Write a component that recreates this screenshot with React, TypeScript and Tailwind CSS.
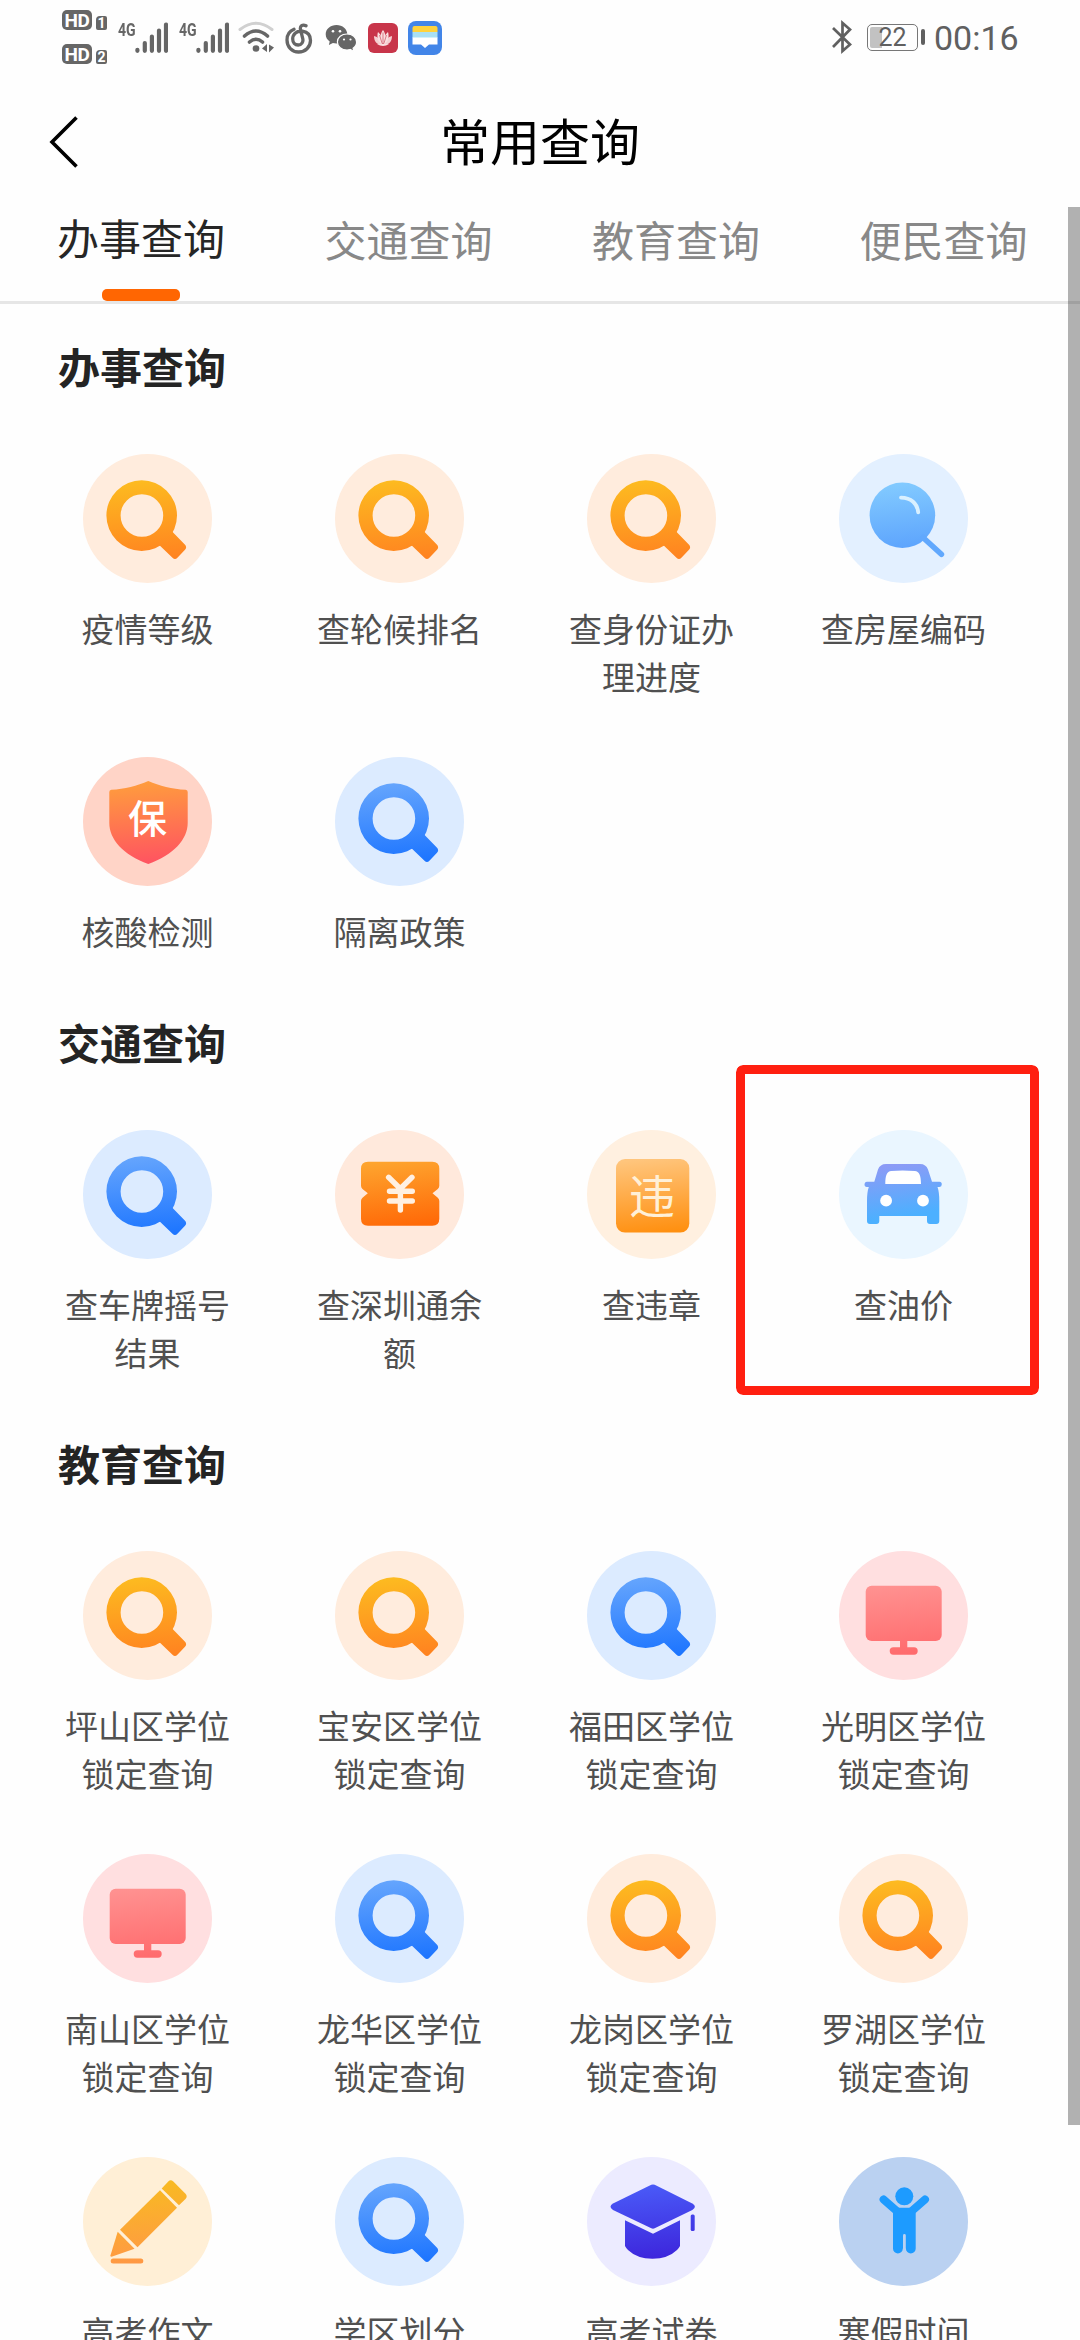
import React from "react";

type IconKind =
  | "searchOrange" | "searchBlue" | "lens" | "shield" | "ticket"
  | "violation" | "car" | "monitor" | "pencil" | "cap" | "person";

type Item = { label: string; icon: IconKind; marked?: boolean };
type Section = { title: string; items: Item[] };

const sections: Section[] = [
  {
    title: "办事查询",
    items: [
      { label: "疫情等级", icon: "searchOrange" },
      { label: "查轮候排名", icon: "searchOrange" },
      { label: "查身份证办理进度", icon: "searchOrange" },
      { label: "查房屋编码", icon: "lens" },
      { label: "核酸检测", icon: "shield" },
      { label: "隔离政策", icon: "searchBlue" },
    ],
  },
  {
    title: "交通查询",
    items: [
      { label: "查车牌摇号结果", icon: "searchBlue" },
      { label: "查深圳通余额", icon: "ticket" },
      { label: "查违章", icon: "violation" },
      { label: "查油价", icon: "car", marked: true },
    ],
  },
  {
    title: "教育查询",
    items: [
      { label: "坪山区学位锁定查询", icon: "searchOrange" },
      { label: "宝安区学位锁定查询", icon: "searchOrange" },
      { label: "福田区学位锁定查询", icon: "searchBlue" },
      { label: "光明区学位锁定查询", icon: "monitor" },
      { label: "南山区学位锁定查询", icon: "monitor" },
      { label: "龙华区学位锁定查询", icon: "searchBlue" },
      { label: "龙岗区学位锁定查询", icon: "searchOrange" },
      { label: "罗湖区学位锁定查询", icon: "searchOrange" },
      { label: "高考作文", icon: "pencil" },
      { label: "学区划分", icon: "searchBlue" },
      { label: "高考试卷", icon: "cap" },
      { label: "寒假时间", icon: "person" },
    ],
  },
];

const palette: Record<IconKind, { bg: string; from: string; to: string; y1: number; y2: number }> = {
  searchOrange: { bg: "#ffecdd", from: "#fdbb20", to: "#ff8320", y1: 26, y2: 106 },
  searchBlue: { bg: "#dcebff", from: "#65a5fd", to: "#1d75ff", y1: 26, y2: 106 },
  lens: { bg: "#e3f0ff", from: "#83cbff", to: "#5ba2fd", y1: 28, y2: 98 },
  shield: { bg: "#ffd4c7", from: "#ff9d3d", to: "#ff5361", y1: 24, y2: 107 },
  ticket: { bg: "#ffe9dc", from: "#fea42e", to: "#ff6a08", y1: 31, y2: 96 },
  violation: { bg: "#fff0e0", from: "#ffc57c", to: "#ff9011", y1: 29, y2: 103 },
  car: { bg: "#eaf6ff", from: "#8c9bf6", to: "#4cb0ff", y1: 34, y2: 86 },
  monitor: { bg: "#ffdfe0", from: "#ff9190", to: "#ff6b6d", y1: 34, y2: 104 },
  pencil: { bg: "#ffefd6", from: "#f8bc20", to: "#ff9845", y1: 22, y2: 106 },
  cap: { bg: "#ecebff", from: "#4a5bf8", to: "#3d26dc", y1: 27, y2: 102 },
  person: { bg: "#bad1f1", from: "#1d9bff", to: "#1d9bff", y1: 30, y2: 96 },
};

function Glyph({ kind, fill }: { kind: IconKind; fill: string }) {
  const bg = palette[kind].bg;
  switch (kind) {
    case "searchOrange":
    case "searchBlue":
      return (
        <g fill={fill}>
          <path fillRule="evenodd" d="M58.7 26.3a35.2 35.2 0 1 1 0 70.6a35.2 35.2 0 1 1 0-70.6ZM58.9 40.2a21.3 21.3 0 1 0 0 42.6a21.3 21.3 0 1 0 0-42.6Z" />
          <path d="M88.5 76q.4 1.3 1.6 2.4l11.7 12q2.600 2.700 .2 5.400l-7.600 8q-2.400 2.400-4.900 0L78.300 93q-1.500-1.700-3.500-1.300l-1-7 8-9Z" />
        </g>
      );
    case "lens":
      return (
        <g>
          <circle cx="63.4" cy="61.2" r="32.8" fill={fill} />
          <path d="M84 83.500l18.400 16.800" stroke="#61a8fd" strokeWidth="5.600" strokeLinecap="round" />
          <path d="M62 43.600c10 0 16.500 6 17.200 14.800" fill="none" stroke="#d9f0ff" strokeWidth="3.800" strokeLinecap="round" />
        </g>
      );
    case "shield":
      return (
        <g>
          <path fill={fill} d="M65.300 24c11 5 24 8 37.400 8.800q2 .2 2 2.200v31c0 16-14 32-39.400 41C40 98 26.300 82 26.300 66V35q0-2 2-2.200C41.500 32 54.300 29 65.300 24Z" />
          <text x="64.500" y="75.500" textAnchor="middle" fontSize="39" fontWeight="500" fill="#fff" fontFamily="Noto Sans CJK SC, sans-serif">保</text>
        </g>
      );
    case "ticket":
      return (
        <g>
          <path fill={fill} d="M33 31.700h64.300q7 0 7 7v17q0 2-1.500 3.200l-5.300 4.400 5.300 4.400q1.500 1.200 1.500 3.200v17.800q0 7-7 7H33q-7 0-7-7V70.900q0-2 1.500-3.200l5.300-4.400-5.300-4.400Q26 57.700 26 55.700v-17q0-7 7-7Z" />
          <path d="M53.600 47.300l11.700 11.500L77 47.300M54.500 61.200h22.800M54.500 71h22.800M65.400 60v20" fill="none" stroke="#fff0e2" strokeWidth="5.400" strokeLinecap="round" />
        </g>
      );
    case "violation":
      return (
        <g>
          <rect x="29" y="29" width="73.300" height="73.600" rx="9" fill={fill} />
          <text x="65" y="82.500" textAnchor="middle" fontSize="46" fill="#fff0d8" fontFamily="Noto Sans CJK SC, sans-serif">违</text>
        </g>
      );
    case "car":
      return (
        <g>
          <path fill={fill} d="M47 34h34q6 0 8 5.500L93 51.700h7.500q2.300 0 2.300 2.600T100.500 57h-2q1.800 5 1.800 14v20q0 3-3 3H91q-3 0-3-3v-5H40.300v5q0 3-3 3H31q-3 0-3-3V71q0-9 1.800-14h-2q-2.300 0-2.300-2.700t2.300-2.600h7.500L39 39.500Q41 34 47 34Z" />
          <path fill="#fff" d="M46.300 54c0-8 1.500-13 6-13q11-1 23.500 0c4.500 0 6.200 5 6.200 13Z" />
          <circle cx="47.100" cy="70.700" r="5.900" fill="#fff" />
          <circle cx="84" cy="70.700" r="5.900" fill="#fff" />
        </g>
      );
    case "monitor":
      return (
        <g fill={fill}>
          <rect x="26.700" y="34.700" width="76" height="55.300" rx="6" />
          <rect x="61" y="89" width="7.300" height="9" />
          <rect x="50.700" y="96.300" width="28" height="7.400" rx="3.700" />
        </g>
      );
    case "pencil":
      return (
        <g fill={fill}>
          <path d="M78.700 31.500l6.600-7q2.400-2.400 5 0l12.200 12.200q2.400 2.600 0 5.300L96 48.300Z" />
          <path d="M77 33.300L94 50.700L54.500 90.200L37 72.700Z" />
          <path d="M34.700 74.700L51.500 91.800L28.500 99.700q-1.200 0-1-1.500Z" />
          <rect x="27.700" y="101.500" width="32.600" height="5" rx="2.500" />
        </g>
      );
    case "cap":
      return (
        <g fill={fill}>
          <path d="M64.300 27.800q1.700-.8 3.400 0l37.600 18.700q5.200 3.200 0 6.400L67.700 71.300q-1.700.8-3.400 0L26 52.900q-5-3.200 0-6.400Z" />
          <path d="M38 63.300L66 76.800L93 63.300V89q-1 2-3 4q-9 8.700-24.500 8.700T41 93q-2-2-3-4Z" />
          <rect x="103.700" y="57.500" width="4" height="16.500" rx="1.500" />
        </g>
      );
    case "person":
      return (
        <g fill={fill}>
          <circle cx="65.300" cy="39.300" r="9" />
          <path d="M44.600 42.500L60 56M86 42.500L70.500 56" stroke="#1d9bff" strokeWidth="8" strokeLinecap="round" />
          <path d="M57 50.700h17l2.700 5V91.500a4.900 4.900 0 0 1-9.800 0h-3.100a4.900 4.900 0 0 1-9.800 0V55Z" />
          <path d="M64 98V78.500a1.400 1.400 0 0 1 2.800 0V98Z" fill={bg} />
        </g>
      );
  }
}

function ServiceIcon({ kind }: { kind: IconKind }) {
  const id = React.useId();
  const p = palette[kind];
  return (
    <svg className="block h-[129px] w-[129px] shrink-0" viewBox="0 0 129 129" aria-hidden="true">
      <defs>
        <linearGradient id={id} gradientUnits="userSpaceOnUse" x1="58" y1={p.y1} x2="66" y2={p.y2}>
          <stop offset="0" stopColor={p.from} />
          <stop offset="1" stopColor={p.to} />
        </linearGradient>
      </defs>
      <circle cx="64.500" cy="64.500" r="64.500" fill={p.bg} />
      <Glyph kind={kind} fill={`url(#${id})`} />
    </svg>
  );
}

function HdBadge({ n }: { n: string }) {
  return (
    <div className="flex h-5 items-end gap-[4px] font-['Roboto',sans-serif] font-bold text-white">
      <span className="flex h-5 w-[30px] items-center justify-center rounded-[5px] bg-[#666] text-[19px] leading-none tracking-[-0.5px]">HD</span>
      <span className="flex h-[14px] w-[11px] items-center justify-center rounded-[2px] rounded-tl-[4px] bg-[#666] text-[14px] leading-none">{n}</span>
    </div>
  );
}

function Signal() {
  return (
    <div className="flex h-[32px] w-[50px] items-start">
      <span className="w-[17px] origin-left scale-x-[0.74] pt-[1px] font-['Roboto',sans-serif] text-[19px] font-bold leading-[16px] text-[#666]">4G</span>
      <svg className="h-[32px] w-[33px] shrink-0" viewBox="0 0 33 32" stroke="#666" strokeWidth="4.200" strokeLinecap="round">
        <path d="M2.400 28.800v1M9.800 22v7.800M16.900 15.500v14.300M24 9.500v20.300M31 3.500v26.300" />
      </svg>
    </div>
  );
}

function StatusBar() {
  return (
    <div className="flex h-[80px] shrink-0 items-start justify-between pl-[62px] pr-[62px]">
      <div className="flex items-start">
        <div className="flex flex-col gap-[14px] pt-[10px]">
          <HdBadge n="1" />
          <HdBadge n="2" />
        </div>
        <div className="ml-[11px] flex gap-[11px] pt-[21px]">
          <Signal />
          <Signal />
        </div>
        <svg className="ml-[9px] mt-[20px] h-[34px] w-[38px]" viewBox="0 0 38 34" fill="none" strokeLinecap="round">
          <path d="M2 9.500Q18 -3 34 9.500" stroke="#d0d0d0" strokeWidth="3" />
          <path d="M6.500 16Q18 6 29.500 16" stroke="#666" strokeWidth="3.600" />
          <path d="M11.500 22Q18 16.500 24.500 22" stroke="#666" strokeWidth="3.600" />
          <circle cx="18" cy="28.500" r="3.300" fill="#666" />
          <path d="M24 28.500l5-4.500v8ZM31 24.500v8l5-5Z" fill="#666" />
        </svg>
        <svg className="ml-[9px] mt-[23px] h-[31px] w-[28px]" viewBox="0 0 28 31" fill="none" stroke="#666" strokeWidth="3.300" strokeLinecap="round">
          <path d="M9 6.300C4.500 8 2 12 2 17c0 7 5 12 11.600 12S25.500 24 25.500 17.500c0-5-3-8.500-8-9.300C11 7.500 7.700 11.500 7.700 16c0 3.500 2.200 6 5.500 6s5.300-3 4.600-6.200L15.500 6.500c-.8-3.500 2-5.500 5.500-3.700" />
        </svg>
        <svg className="ml-[12px] mt-[24px] h-[28px] w-[33px]" viewBox="0 0 33 28">
          <path d="M11.500 1C5.500 1 .7 5 .7 10.300c0 3 1.600 5.600 4 7.300l-.8 3.400 4-2c1.100.3 2.300.5 3.600.5 6 0 10.800-4 10.800-9.200S17.500 1 11.500 1Z" fill="#666" />
          <path d="M22 10c-5.400 0-9.600 3.500-9.600 8s4.200 8 9.600 8c1.200 0 2.300-.2 3.300-.5l3.700 2-.9-3.200c2.200-1.500 3.500-3.700 3.500-6.300 0-4.500-4.200-8-9.600-8Z" fill="#666" stroke="#fff" strokeWidth="1.200" />
          <circle cx="8" cy="7.300" r="1.300" fill="#fff" /><circle cx="15" cy="7.300" r="1.300" fill="#fff" />
          <circle cx="19" cy="15.500" r="1.100" fill="#fff" /><circle cx="25.500" cy="15.500" r="1.100" fill="#fff" />
        </svg>
        <svg className="ml-[10px] mt-[23px] h-[30px] w-[30px]" viewBox="0 0 30 30">
          <rect width="30" height="30" rx="6" fill="#c8354a" />
          <g fill="#f9dfe0">
            <path d="M15 7c3 4 3.500 9 0 14c-3.500-5-3-10 0-14Z" />
            <path d="M10 9c3.500 3 5 8 4 12c-4-2-5.500-7-4-12ZM20 9c-3.500 3-5 8-4 12c4-2 5.500-7 4-12Z" />
            <path d="M6 13c4 1 7 4 8 8.500c-5 .5-8-3-8-8.500ZM24 13c-4 1-7 4-8 8.500c5 .5 8-3 8-8.500Z" opacity=".9" />
            <path d="M9 21h12q-6 4-12 0Z" />
          </g>
          <path d="M15 9.500v10M11.500 12l2.500 8M18.500 12L16 20" stroke="#c8354a" strokeWidth=".6" />
        </svg>
        <svg className="ml-[10px] mt-[21px] h-[34px] w-[34px]" viewBox="0 0 34 34">
          <rect width="34" height="34" rx="8" fill="#4285e8" />
          <path d="M4.500 11V7q0-2 2-2h21q2 0 2 2v4Z" fill="#ffd23c" />
          <path d="M4.500 11h25v6h-25Z" fill="#a9e0f5" />
          <path d="M4.500 16.500h25v7h-8.500L17 27l-4-3.500H4.500Z" fill="#fff" />
        </svg>
      </div>
      <div className="flex items-start text-[#606060]">
        <svg className="mt-[20px] h-[34px] w-[22px]" viewBox="0 0 22 34" fill="none" stroke="#606060" strokeWidth="2.700">
          <path d="M2 8L19 24.500L11.500 31V3L19 9.500L2 27" />
        </svg>
        <div className="relative ml-[14px] mt-[24px] flex h-[27px] w-[51px] items-center justify-center rounded-[5px] border-[1.500px] border-[#777] font-['Roboto',sans-serif] text-[25px] leading-none">
          <span className="absolute left-[2px] top-[2px] h-[21px] w-[12px] rounded-l-[2px] bg-[#c2c2c2]" />
          <span className="relative">22</span>
        </div>
        <span className="ml-[3px] mt-[29px] h-[16px] w-[4px] rounded-[2px] bg-[#606060]" />
        <span className="ml-[9px] mt-[18px] w-[84px] whitespace-nowrap font-['Roboto',sans-serif] text-[34px] leading-[40px]">00:16</span>
      </div>
    </div>
  );
}

const tabs = ["办事查询", "交通查询", "教育查询", "便民查询"];

export default function App() {
  return (
    <div className="relative flex h-[2340px] w-[1080px] flex-col overflow-hidden bg-[#fefefe] font-['Noto_Sans_CJK_SC',sans-serif]">
      <StatusBar />
      <header className="grid h-[124px] shrink-0 grid-cols-[120px_1fr_120px] items-center">
        <svg className="ml-[48px] h-[54px] w-[32px]" viewBox="0 0 32 54" fill="none" stroke="#000" strokeWidth="3.600">
          <path d="M28.500 2.500L4 27l24.500 24.500" />
        </svg>
        <h1 className="pb-[6px] text-center text-[50px] leading-[60px] text-black">常用查询</h1>
      </header>
      <nav className="flex h-[100px] shrink-0 border-b-[3px] border-[#e6e6e6] pl-[57px]">
        {tabs.map((t, i) => (
          <div key={t} className="flex w-[267.500px] shrink-0 flex-col items-start">
            {i === 0 ? (
              <div className="flex flex-col items-center">
                <span className="mt-[3px] h-[60px] text-[42px] leading-[60px] text-[#262626]">{t}</span>
                <span className="mt-[22px] h-[12px] w-[78px] rounded-[5px] bg-[#ff6602]" />
              </div>
            ) : (
              <span className="mt-[5px] text-[42px] leading-[60px] text-[#888]">{t}</span>
            )}
          </div>
        ))}
      </nav>
      <main className="flex shrink-0 flex-col gap-[25px]">
        {sections.map((s) => (
          <section key={s.title} className="flex shrink-0 flex-col">
            <h2 className="mb-[22px] flex h-[128px] items-center pb-[4px] pl-[58px] text-[42px] font-bold leading-[60px] text-[#242424]">{s.title}</h2>
            <div className="ml-[21.500px] grid w-[1008px] grid-cols-4 gap-y-[57px]">
              {s.items.map((it) => (
                <div key={it.label} className="relative flex flex-col items-center gap-[21px]">
                  <ServiceIcon kind={it.icon} />
                  <span className="w-[168px] text-center text-[33px] leading-[48px] text-[#505050]">{it.label}</span>
                  {it.marked && (
                    <div className="absolute -top-[65px] left-[-41.500px] h-[330px] w-[303px] rounded-[7px] bg-[#ff1f10] [mask:linear-gradient(#000,#000)_exclude,linear-gradient(#000,#000)_center/285px_312px_no-repeat]" />
                  )}
                </div>
              ))}
            </div>
          </section>
        ))}
      </main>
      <div className="absolute right-0 top-[207px] h-[1918px] w-[12px] bg-black/30" />
    </div>
  );
}
